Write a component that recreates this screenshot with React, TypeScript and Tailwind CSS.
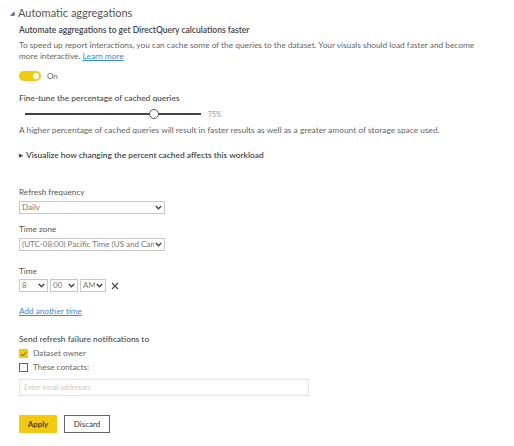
import React, { useState } from 'react';

function Select({ value, className }: { value: string; className: string }) {
    return (
        <div className={`flex items-center justify-between border border-[#c8c8c8] bg-white h-[13px] pl-[2px] pr-[2px] ${className}`}>
            <span className="overflow-hidden whitespace-nowrap text-[8px] leading-[11px] text-[#777]">{value}</span>
            <svg width="7" height="5" viewBox="0 0 7 5" className="shrink-0 ml-[1px]">
                <path d="M0.8 1 L3.5 3.8 L6.2 1" stroke="#444" strokeWidth="1.4" fill="none" />
            </svg>
        </div>
    );
}

export default function App() {
    const [on] = useState(true);

    return (
        <div className="w-[514px] h-[446px] bg-white overflow-hidden text-[#333]" style={{ fontFamily: 'Lato, "Open Sans", sans-serif' }}>
            <div className="pt-[6px] pl-[10px]">
                {/* section header */}
                <div className="flex items-center gap-[3px] text-[11px] text-[#555] leading-[14px]">
                    <span className="text-[6px] text-[#666]">◢</span>
                    <span>Automatic aggregations</span>
                </div>

                <div className="pl-[9px]">
                    <div className="mt-[4px] text-[8.5px] font-semibold text-[#444] leading-[12px]">
                        Automate aggregations to get DirectQuery calculations faster
                    </div>
                    <p className="mt-[4px] text-[8.3px] text-[#666] leading-[11px] w-[460px]">
                        To speed up report interactions, you can cache some of the queries to the dataset. Your visuals should load faster and become more interactive.{' '}
                        <span className="text-[#3b8ad8] underline">Learn more</span>
                    </p>

                    {/* toggle */}
                    <div className="mt-[8px] flex items-center gap-[6px]">
                        <div className={`w-[22px] h-[10px] rounded-full ${on ? 'bg-[#f2c811]' : 'bg-gray-300'} flex items-center justify-end pr-[2px]`}>
                            <div className="w-[6px] h-[6px] rounded-full bg-white" />
                        </div>
                        <span className="text-[8px] text-[#666]">On</span>
                    </div>

                    <div className="mt-[11px] text-[8.4px] font-semibold text-[#555] leading-[11px]">
                        Fine-tune the percentage of cached queries
                    </div>

                    {/* slider */}
                    <div className="mt-[4px] flex items-center h-[12px]">
                        <div className="relative ml-[6px] w-[176px] h-[2px] bg-[#444]">
                            <div className="absolute left-[124px] -top-[4px] w-[10px] h-[10px] rounded-full bg-white border-[1.5px] border-[#555]" />
                        </div>
                        <span className="ml-[7px] text-[7px] text-[#999]">75%</span>
                    </div>

                    <p className="mt-[5px] text-[8.4px] text-[#666] leading-[11px]">
                        A higher percentage of cached queries will result in faster results as well as a greater amount of storage space used.
                    </p>

                    <div className="mt-[14px] flex items-center gap-[3px] text-[8.4px] font-semibold text-[#444] leading-[11px]">
                        <span className="text-[5px]">▶</span>
                        <span>Visualize how changing the percent cached affects this workload</span>
                    </div>

                    {/* refresh settings */}
                    <div className="mt-[26px] text-[8.2px] text-[#555] leading-[11px]">Refresh frequency</div>
                    <Select value="Daily" className="mt-[3px] w-[146px]" />

                    <div className="mt-[10px] text-[8.2px] text-[#555] leading-[11px]">Time zone</div>
                    <Select value="(UTC-08:00) Pacific Time (US and Canada)" className="mt-[3px] w-[146px]" />

                    <div className="mt-[15px] text-[8.2px] text-[#555] leading-[11px]">Time</div>
                    <div className="mt-[2px] flex items-center gap-[2px]">
                        <Select value="8" className="w-[29px]" />
                        <Select value="00" className="w-[28px]" />
                        <Select value="AM" className="w-[26px]" />
                        <svg width="8" height="8" viewBox="0 0 8 8" className="ml-[3px]">
                            <path d="M1 1 L7 7 M7 1 L1 7" stroke="#444" strokeWidth="1.1" />
                        </svg>
                    </div>

                    <div className="mt-[14px] text-[8.2px] text-[#3b8ad8] underline leading-[11px]">Add another time</div>

                    <div className="mt-[17px] text-[8.4px] font-semibold text-[#555] leading-[11px]">Send refresh failure notifications to</div>
                    <div className="mt-[3px] flex items-center gap-[5px]">
                        <div className="w-[9px] h-[9px] bg-[#f2c811] flex items-center justify-center">
                            <svg width="7" height="6" viewBox="0 0 7 6">
                                <path d="M0.8 3 L2.8 5 L6.2 0.8" stroke="#6b5a10" strokeWidth="1" fill="none" />
                            </svg>
                        </div>
                        <span className="text-[8.2px] text-[#666] leading-[11px]">Dataset owner</span>
                    </div>
                    <div className="mt-[3px] flex items-center gap-[5px]">
                        <div className="w-[9px] h-[9px] border border-[#666] bg-white" />
                        <span className="text-[8.2px] text-[#666] leading-[11px]">These contacts:</span>
                    </div>

                    <div className="mt-[6px] w-[290px] h-[17px] border border-[#e4e4e4] flex items-center px-[4px]">
                        <span className="text-[7px] text-[#ccc]">Enter email addresses</span>
                    </div>

                    <div className="mt-[19px] flex items-center gap-[7px]">
                        <button className="h-[18px] w-[38px] bg-[#f2c811] text-[8px] text-[#333] font-semibold">Apply</button>
                        <button className="h-[18px] w-[46px] bg-white border border-[#666] text-[8px] text-[#333]">Discard</button>
                    </div>
                </div>
            </div>
        </div>
    );
}
